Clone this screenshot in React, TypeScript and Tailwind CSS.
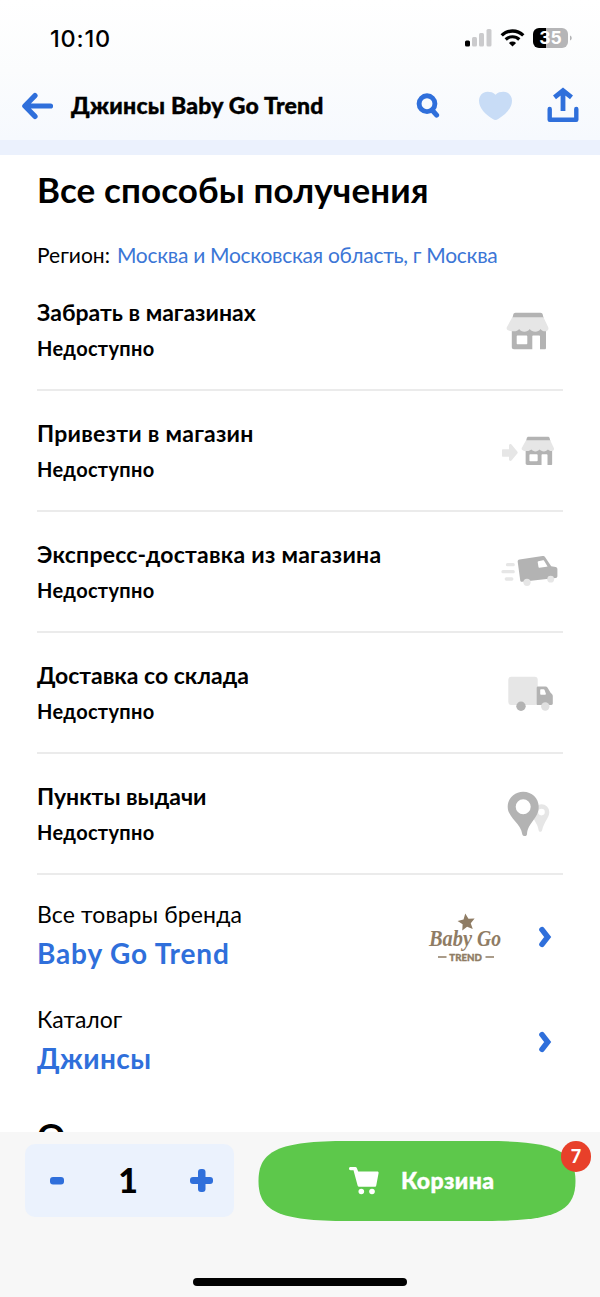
import React from "react";

const Storefront = () => (
  <g>
    <path d="M15.5 7.700h25c1.200 0 2 .8 2.200 1.800l1 4H12.300l1-4c.2-1 1-1.800 2.200-1.800z" fill="#b3b3b3" />
    <path fillRule="evenodd" d="M11.800 24H46v19c0 .8-.5 1.300-1.300 1.300H40V31.500c0-.6-.4-1-1-1h-5.700c-.6 0-1 .4-1 1v12.800H14c-1.400 0-2.200-.8-2.200-2.200zM17.700 30.500c-.6 0-1 .4-1 1v6.800c0 .6.4 1 1 1h8.600c.6 0 1-.4 1-1v-6.800c0-.6-.4-1-1-1z" fill="#b3b3b3" />
    <path d="M12.300 12.300h31.200l4.800 10.200c.6 2-.8 3.800-3.200 3.800-2 0-3.500-.8-4.600-2.300-1.200 1.800-2.900 2.700-5.200 2.700s-4.300-1-5.600-2.700c-1.300 1.700-3 2.700-5.300 2.700s-4-1-5.200-2.700c-1.200 1.500-2.900 2.300-5.400 2.300-4.800 0-8-1.200-7-4z" fill="#e6e6e6" />
  </g>
);

const PickupIcon = () => (
  <svg width="60" height="50" viewBox="0 0 60 50"><Storefront /></svg>
);

const BringIcon = () => (
  <svg width="60" height="50" viewBox="0 0 60 50">
    <path d="M3 23.300h6v-3.500c0-1.600 1.400-2.200 2.500-1.200l5.600 6.600c.8.900.8 1.700 0 2.600l-5.600 6.600c-1.100 1-2.500.4-2.500-1.200v-2.500H3c-.6 0-1-.4-1-1v-5.400c0-.6.4-1 1-1z" fill="#e6e6e6" />
    <g transform="translate(16.5 4.7) scale(.775)"><Storefront /></g>
  </svg>
);

const ExpressIcon = () => (
  <svg width="60" height="50" viewBox="0 0 60 50">
    <path d="M7.500 17.700h5.700M3 24.700h10.200M6.300 32h5.500" stroke="#e6e6e6" strokeWidth="3.300" strokeLinecap="round" />
    <path fillRule="evenodd" d="M19.500 12.400 42.500 9c1-.1 1.900.1 2.500 1l6.200 9.300 4.400.6c1.100.2 1.700.9 1.800 2v7.200c0 1.200-.6 1.800-1.700 2l-33.600 3.600c-1 .1-1.700-.4-1.900-1.500L17.700 14.700c-.2-1.300.5-2.100 1.800-2.300zM38.400 14.200c-.5.1-.8.4-.7 1l.8 4.900c.1.500.4.7.9.6l7.200-.9c.6-.1.8-.5.5-1l-3-5c-.3-.5-.6-.6-1.100-.5z" fill="#b3b3b3" />
    <circle cx="27" cy="35.300" r="3.600" fill="#e6e6e6" />
    <circle cx="50.700" cy="32.200" r="3.400" fill="#e6e6e6" />
  </svg>
);

const WarehouseIcon = () => (
  <svg width="60" height="50" viewBox="0 0 60 50">
    <rect x="8.300" y="8.700" width="29.400" height="28.300" rx="3" fill="#e6e6e6" />
    <path fillRule="evenodd" d="M38.300 18.500h7.200c.9 0 1.600.4 2.100 1.200l3 5 1.300 1.300c.6.600.9 1.200.9 2v7.500c0 .9-.5 1.400-1.400 1.400H36.700v-17c0-.9.700-1.400 1.600-1.400zM41 21.300c-.5 0-.8.300-.8.800v3.800c0 .5.300.8.800.8h4.200c.6 0 .9-.4.700-.9l-1.300-3.700c-.2-.5-.5-.8-1.100-.8z" fill="#b3b3b3" />
    <circle cx="21" cy="38.300" r="4.700" fill="#b3b3b3" />
    <circle cx="45.300" cy="38.500" r="4.200" fill="#e0e0e0" />
  </svg>
);

const PointsIcon = () => (
  <svg width="60" height="50" viewBox="0 0 60 50">
    <path fillRule="evenodd" d="M41.500 15.200a7.800 7.800 0 0 1 7.800 7.800c0 6-4.700 8.500-7.300 18.500-.5 1.800-3 1.800-3.300 0-.9-6-4-9-5-12V23a7.800 7.800 0 0 1 7.800-7.800zm0 4.600a3.300 3.300 0 1 0 0 6.600 3.300 3.300 0 0 0 0-6.600z" fill="#e6e6e6" />
    <path fillRule="evenodd" d="M23.200 2.700c8.700 0 15.500 6.600 15.500 15 0 12-10.800 15.500-11.700 27.500-.1 1.200-.8 1.800-2.200 1.800s-2.300-.6-2.500-1.800C20.700 34 7.700 29 7.700 17.700c0-8.400 6.800-15 15.500-15zm0 7.500a7.500 7.500 0 1 0 0 15 7.500 7.500 0 0 0 0-15z" fill="#b3b3b3" />
  </svg>
);

const Chevron = () => (
  <svg width="14" height="22" viewBox="0 0 14 22" fill="none">
    <path d="M4 3.600 9.700 11 4 18.400" stroke="#2f6fdb" strokeWidth="5.600" strokeLinecap="round" strokeLinejoin="miter" />
  </svg>
);

const BrandLogo = () => (
  <svg width="76" height="52" viewBox="0 0 76 52">
    <path transform="translate(38.500 10.500) rotate(-8)" d="M0-9 2.500-3.500 8.600-2.800 4.100 1.300 5.300 7.300 0 4.300-5.300 7.300-4.100 1.300-8.600-2.800-2.500-3.500z" fill="#8f7c64" />
    <text x="1" y="33.700" fontFamily="'Liberation Serif', serif" fontStyle="italic" fontWeight="700" fontSize="23" textLength="43" lengthAdjust="spacingAndGlyphs" fill="#8f7c64">Baby</text>
    <text x="49" y="33.700" fontFamily="'Liberation Serif', serif" fontStyle="italic" fontWeight="700" fontSize="23" textLength="24" lengthAdjust="spacingAndGlyphs" fill="#8f7c64">Go</text>
    <path d="M10 45h8.500M57.500 45H66" stroke="#8f7c64" strokeWidth="1.300" />
    <text x="21.300" y="48.500" fontFamily="Lato, sans-serif" fontWeight="900" fontSize="10" textLength="32.500" lengthAdjust="spacingAndGlyphs" fill="#8f7c64" stroke="#8f7c64" strokeWidth=".4">TREND</text>
  </svg>
);

const methods = [
  { title: "Забрать в магазинах", tracking: "", Icon: PickupIcon },
  { title: "Привезти в магазин", tracking: "tracking-[0.27px]", Icon: BringIcon },
  { title: "Экспресс-доставка из магазина", tracking: "tracking-[0.25px]", Icon: ExpressIcon },
  { title: "Доставка со склада", tracking: "", Icon: WarehouseIcon },
  { title: "Пункты выдачи", tracking: "", Icon: PointsIcon },
];

const StatusBar = () => (
  <div className="flex h-[76px] items-center justify-between pr-[27px] pl-[50px]">
    <span className="pt-px font-[Inter,sans-serif] text-[23.500px] font-medium tracking-[0.8px]">10:10</span>
    <div className="flex items-center">
      <svg width="27" height="20" viewBox="0 0 27 20">
        <rect x="0" y="12.500" width="5" height="6" rx="1.500" fill="#000" />
        <rect x="7" y="9" width="5" height="9.500" rx="1.500" fill="#cbcbcd" />
        <rect x="14" y="5" width="5" height="13.500" rx="1.500" fill="#cbcbcd" />
        <rect x="21.500" y="1" width="5" height="17.500" rx="1.500" fill="#cbcbcd" />
      </svg>
      <svg className="ml-2" width="25" height="20" viewBox="0 0 25 20" fill="none">
        <path d="M1.700 7.400a15.500 15.500 0 0 1 21.600 0" stroke="#000" strokeWidth="3.300" />
        <path d="M5.700 11.500a9.800 9.800 0 0 1 13.600 0" stroke="#000" strokeWidth="3.200" />
        <path d="M12.500 18.600 8.900 14.900a5.300 5.300 0 0 1 7.200 0z" fill="#000" />
      </svg>
      <svg className="ml-2" width="40" height="20" viewBox="0 0 40 20">
        <path d="M6 0h7v20H6a6 6 0 0 1-6-6V6a6 6 0 0 1 6-6z" fill="#000" />
        <path d="M13 0h16a6 6 0 0 1 6 6v8a6 6 0 0 1-6 6H13z" fill="#b5b5b7" />
        <path d="M37 7.500c2.300.8 2.300 4.200 0 5z" fill="#b5b5b7" />
        <text x="17.500" y="16.200" textAnchor="middle" fontFamily="Inter, sans-serif" fontWeight="700" fontSize="17.500" fill="#fff">35</text>
      </svg>
    </div>
  </div>
);

const NavBar = () => (
  <div className="flex h-[60px] items-center pr-[21px] pl-[21px]">
    <svg width="33" height="28" viewBox="0 0 33 28" fill="none">
      <path d="M14 3.600 3.800 14 14 24.400M5 14h24.500" stroke="#2f6fdb" strokeWidth="5.200" strokeLinecap="round" strokeLinejoin="round" />
    </svg>
    <span className="ml-[17px] pb-[2px] text-[23px] font-black tracking-[0.22px] whitespace-nowrap [-webkit-text-stroke:0.4px_black]">Джинсы Baby Go Trend</span>
    <div className="ml-auto flex items-center">
      <svg width="24" height="26" viewBox="0 0 24 26" fill="none">
        <circle cx="11" cy="10.700" r="7.900" stroke="#2f6fdb" strokeWidth="4.900" />
        <path d="m16.500 17.500 4.100 4.700" stroke="#2f6fdb" strokeWidth="5" strokeLinecap="round" />
      </svg>
      <svg className="ml-[39px]" width="33" height="30" viewBox="0 0 34 30">
        <path d="M17 3.500C19.500.8 22 .2 25.200.2c5 0 8.800 4 8.800 9.300 0 7.500-6.600 14.200-14.200 18.900-2 1.200-3.600 1.200-5.600 0C6.600 23.700 0 17 0 9.500 0 4.200 3.800.2 8.800.2 12 .2 14.500.8 17 3.500z" fill="#c8dcf6" />
      </svg>
      <svg className="mb-[3px] ml-[35px]" width="32" height="36" viewBox="0 0 32 36" fill="none">
        <path d="M16 24V5M7.500 10.300 16 3.600l8.500 6.700" stroke="#2f6fdb" strokeWidth="4.800" />
        <path d="M2.700 22v10.800h26.600V22" stroke="#2f6fdb" strokeWidth="4.400" strokeLinecap="round" strokeLinejoin="round" />
      </svg>
    </div>
  </div>
);

export default function App() {
  return (
    <div className="flex h-[1297px] w-[600px] flex-col overflow-hidden bg-white font-[Lato,sans-serif] text-black">
      <header className="h-[140px] shrink-0 bg-linear-to-b from-white via-[#fbfcfd] to-[#f6f9fe]">
        <StatusBar />
        <NavBar />
      </header>
      <div className="h-[15px] shrink-0 bg-[#ebf1fd]" />

      <main className="min-h-0 flex-1 overflow-hidden pr-[37px] pl-[37px]">
        <h1 className="mt-[12px] h-[44px] text-[35px] leading-[44px] font-bold tracking-[0.1px] whitespace-nowrap">Все способы получения</h1>
        <p className="mt-[30px] flex h-[29px] gap-[7px] text-[21px] leading-[28px] whitespace-nowrap">
          <span>Регион:</span>
          <span className="tracking-[-0.28px] text-[#3b76d6]">Москва и Московская область, г Москва</span>
        </p>
        {methods.map(({ title, tracking, Icon }) => (
          <section key={title} className="flex h-[121px] justify-between border-b-2 border-[#ebebeb] pr-[3px]">
            <div className="pt-[28px]">
              <h2 className={`text-[23px] leading-[28px] font-bold whitespace-nowrap ${tracking}`}>{title}</h2>
              <p className="mt-[8px] text-[20px] leading-[28px] font-bold tracking-[0.3px]">Недоступно</p>
            </div>
            <div className="pt-[35px]"><Icon /></div>
          </section>
        ))}
        <div className="mt-[25px] flex h-[80px] justify-between pr-[11px]">
          <div>
            <p className="text-[23px] leading-[28px] tracking-[0.12px] whitespace-nowrap">Все товары бренда</p>
            <p className="mt-[8px] text-[28px] leading-[34px] font-bold tracking-[0.85px] whitespace-nowrap text-[#2f6fdb]">Baby Go Trend</p>
          </div>
          <div className="flex items-start">
            <div className="mt-[12px] mr-[34px]"><BrandLogo /></div>
            <div className="mt-[26px]"><Chevron /></div>
          </div>
        </div>
        <div className="mt-[25px] flex h-[80px] justify-between pr-[11px]">
          <div>
            <p className="text-[23px] leading-[28px]">Каталог</p>
            <p className="mt-[8px] text-[28px] leading-[34px] font-bold tracking-[0.4px] text-[#2f6fdb]">Джинсы</p>
          </div>
          <div className="mt-[26px]"><Chevron /></div>
        </div>
        <h1 className="mt-[28px] text-[35px] leading-[44px] font-bold">О</h1>
      </main>

      <footer className="h-[165px] shrink-0 bg-[#f7f7f7] pl-[25px]">
        <div className="flex">
          <div className="mt-[12px] flex h-[73px] w-[209px] items-center justify-between rounded-[10px] bg-[#ebf2fd] pr-[21px] pl-[25px]">
            <svg width="14" height="8" viewBox="0 0 14 8"><rect width="14" height="7.500" rx="3" fill="#2f6fdb" /></svg>
            <span className="pr-px pb-[2px] pl-[3px] text-[34px] leading-none font-black">1</span>
            <svg width="23" height="23" viewBox="0 0 23 23">
              <rect x="0" y="8" width="23" height="7" rx="3" fill="#2f6fdb" />
              <rect x="8" y="0" width="7.500" height="23" rx="3" fill="#2f6fdb" />
            </svg>
          </div>
          <div className="relative mt-[9px] ml-[24px] flex h-[80px] w-[318px] items-center pl-[91px]">
            <svg className="absolute inset-0" width="318" height="80" viewBox="0 0 318 80">
              <path d="M.5 40C.5 10 20 0 90 0h138c70 0 89.500 10 89.500 40s-19.500 40-89.500 40H90C20 80 .5 70 .5 40z" fill="#5dc84b" />
            </svg>
            <svg className="relative" width="30" height="28" viewBox="0 0 30 28">
              <path d="M1.500 0h4.800c.8 0 1.300.4 1.600 1.200L9.200 4.500h19c1 0 1.600.6 1.400 1.600l-2.300 12.200c-.2 1-.7 1.500-1.700 1.500H10.500c-1 0-1.600-.5-1.900-1.400L4.500 3.200h-3C.6 3.200 0 2.600 0 1.600S.6 0 1.500 0z" fill="#fff" />
              <circle cx="12.300" cy="24.500" r="2.800" fill="#fff" />
              <circle cx="23" cy="24.500" r="2.800" fill="#fff" />
            </svg>
            <span className="relative ml-[22px] pb-[2px] text-[23px] font-black tracking-[0.45px] text-white [-webkit-text-stroke:0.4px_white]">Корзина</span>
            <span className="absolute top-0 right-[-15px] flex h-[31px] w-[30px] items-center justify-center rounded-full bg-[#e8402a] pb-px text-[18px] leading-none font-black text-white">7</span>
          </div>
        </div>
        <div className="mt-[57px] ml-[168px] h-[8px] w-[214px] rounded-full bg-black" />
      </footer>
    </div>
  );
}
